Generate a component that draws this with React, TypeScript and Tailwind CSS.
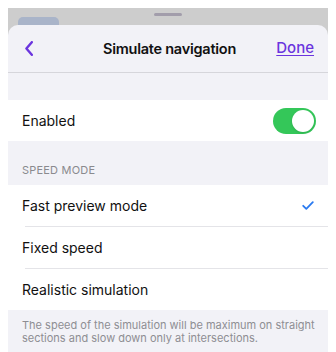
import React from 'react';

const rows = [
  { label: 'Fast preview mode', selected: true },
  { label: 'Fixed speed', selected: false },
  { label: 'Realistic simulation', selected: false },
];

export default function App() {
  return (
    <div
      className="w-[336px] h-[352px] bg-white px-2 pt-2 overflow-hidden"
      style={{ fontFamily: 'Inter, "Noto Sans", sans-serif' }}
    >
      <div className="bg-[#cdcdcd] h-full flex flex-col relative">
        {/* grabber */}
        <div className="absolute top-[5px] left-1/2 -translate-x-1/2 w-[28px] h-[3px] rounded-full bg-[#a29dab]" />
        <div className="h-[17px] pt-[9px] pl-[10px]">
          <div className="w-[41px] h-[8px] rounded-t-[5px] bg-[#a9b4c9]" />
        </div>

        {/* sheet */}
        <div className="flex-1 bg-[#f2f2f7] rounded-t-[10px] flex flex-col">
          <div className="h-[48px] border-b border-[#d6d6db] flex items-center px-[14px]">
            <div className="flex-1 flex items-center pl-[3px]">
              <svg width="8" height="15" viewBox="0 0 8 15" fill="none">
                <path d="M6.8 1.2 L1.4 7.5 L6.8 13.8" stroke="#6b35de" strokeWidth="2.4" strokeLinecap="round" strokeLinejoin="round" />
              </svg>
            </div>
            <div className="text-[14.5px] font-semibold text-[#111] tracking-[-0.25px]">Simulate navigation</div>
            <div className="flex-1 flex justify-end">
              <span className="text-[15px] font-medium text-[#6b35de] underline underline-offset-2">Done</span>
            </div>
          </div>

          <div className="h-[27px]" />

          <div className="bg-white h-[41px] flex items-center justify-between pl-[14px] pr-[12px]">
            <span className="text-[14px] text-[#111]">Enabled</span>
            <div className="w-[43px] h-[26px] rounded-full bg-[#34c759] flex items-center justify-end pr-[2px]">
              <div className="w-[22px] h-[22px] rounded-full bg-white shadow-sm" />
            </div>
          </div>

          <div className="h-[44px] flex items-end pl-[14px] pb-[7px]">
            <span className="text-[11px] uppercase text-[#8a8a8e] tracking-[0.2px]">Speed mode</span>
          </div>

          <div className="bg-white">
            {rows.map((r, i) => (
              <div key={r.label}>
                <div className="h-[41px] flex items-center justify-between pl-[14px] pr-[14px]">
                  <span className="text-[14px] text-[#111]">{r.label}</span>
                  {r.selected && (
                    <svg width="12" height="9" viewBox="0 0 12 9" fill="none">
                      <path d="M1.2 4.8 L4.3 7.8 L10.8 1.2" stroke="#2a7af0" strokeWidth="1.8" strokeLinecap="round" strokeLinejoin="round" />
                    </svg>
                  )}
                </div>
                {i < rows.length - 1 && <div className="ml-[17px] h-px bg-[#e4e4e8]" />}
              </div>
            ))}
          </div>

          <div className="pt-[9px] pl-[14px] pr-[8px] text-[11px] leading-[13px] text-[#8e8e93]">
            The speed of the simulation will be maximum on straight sections and slow down only at intersections.
          </div>
        </div>
      </div>
    </div>
  );
}
